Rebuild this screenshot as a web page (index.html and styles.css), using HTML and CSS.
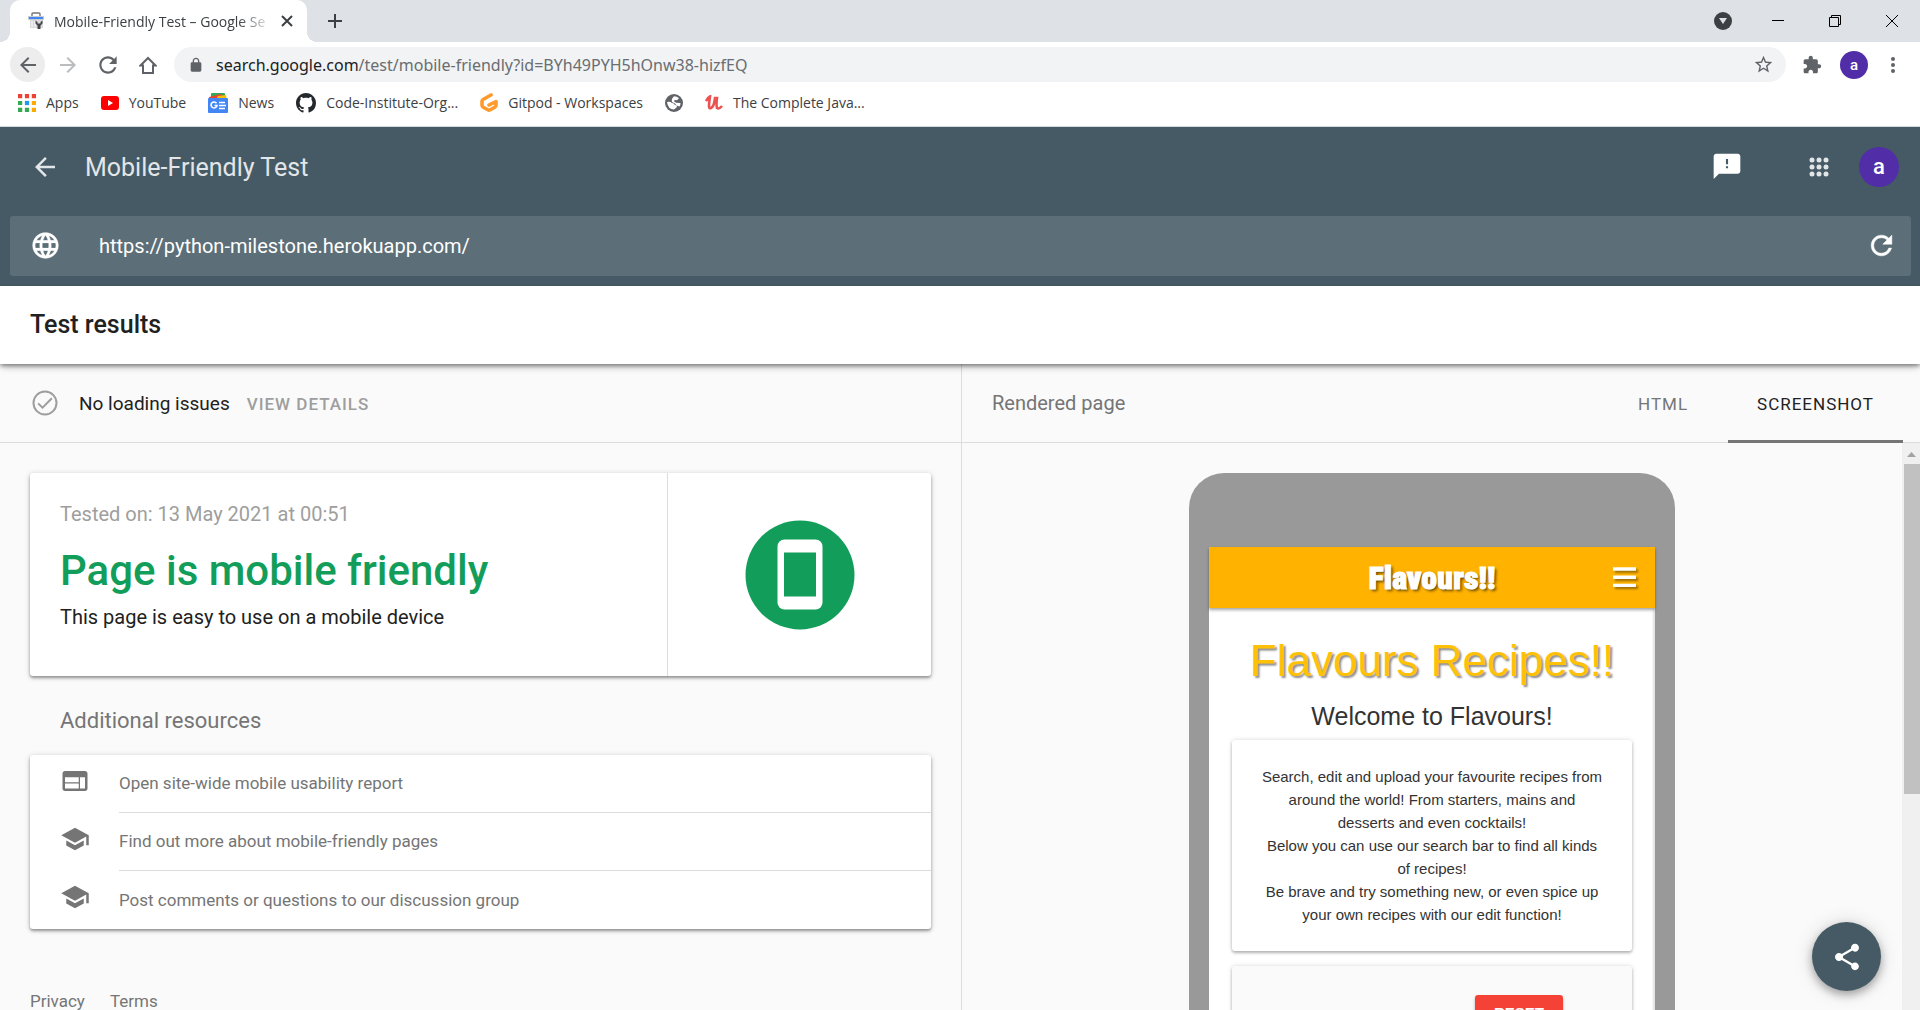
FILE: index.html
```html
<!DOCTYPE html>
<html lang="en">
<head>
<meta charset="utf-8">
<title>Mobile-Friendly Test – Google Search Console</title>
<link rel="stylesheet" href="styles.css">
</head>
<body>
<div class="browser">
  <div class="tabstrip">
    <div class="tab">
      <svg class="tab-favicon" viewBox="0 0 18 18"><path d="M5 4V2q0-1 1-1h6q1 0 1 1v2" fill="none" stroke="#777" stroke-width="1.4"/><path d="M1 4h16v4H1z" fill="#c9cdd2"/><path d="M2 5h14v2H2z" fill="#4285f4"/><path d="M3 8h13v8H3z" fill="#d8dadd"/><path d="M5 9v6M8 9v6" stroke="#fff"/><path d="M8.500 8.500v3l2 2V17h3v-3.500l2-2v-3L13.500 10v1.500h-3V10z" fill="#444"/></svg>
      <span class="tab-title">Mobile-Friendly Test – Google Se</span>
      <button class="icon-button tab-close" aria-label="Close tab"><svg width="12" height="12" viewBox="0 0 12 12"><path d="M1 1l10 10M11 1L1 11" stroke="#3c4043" stroke-width="2"/></svg></button>
    </div>
    <button class="icon-button new-tab" aria-label="New tab"><svg width="16" height="16" viewBox="0 0 16 16"><path d="M8 1v14M1 8h14" stroke="#3c4043" stroke-width="2"/></svg></button>
    <div class="window-controls">
      <button class="icon-button" aria-label="Search tabs"><svg width="18" height="18" viewBox="0 0 18 18"><circle cx="9" cy="9" r="9" fill="#3c4043"/><path d="M5 6h8l-4 6z" fill="#dee1e6"/></svg></button>
      <button class="icon-button" aria-label="Minimise"><svg width="12" height="12" viewBox="0 0 12 12"><path d="M0 5.500h12" stroke="#000"/></svg></button>
      <button class="icon-button" aria-label="Restore"><svg width="12" height="12" viewBox="0 0 12 12"><path d="M.5 2.500h9v9h-9zM2.500 2.500v-2h9v9h-2" fill="none" stroke="#000"/></svg></button>
      <button class="icon-button" aria-label="Close"><svg width="12" height="12" viewBox="0 0 12 12"><path d="M0 0l12 12M12 0L0 12" stroke="#000"/></svg></button>
    </div>
  </div>
  <div class="toolbar">
    <nav class="toolbar-nav">
      <button class="icon-button round active" aria-label="Back"><svg width="24" height="24" viewBox="0 0 24 24"><path fill="#5f6368" d="M20 11H7.830l5.590-5.590L12 4l-8 8 8 8 1.410-1.410L7.830 13H20v-2z"/></svg></button>
      <button class="icon-button round" aria-label="Forward"><svg width="24" height="24" viewBox="0 0 24 24"><path fill="#babcbe" d="M12 4l-1.410 1.410L16.170 11H4v2h12.170l-5.580 5.590L12 20l8-8z"/></svg></button>
      <button class="icon-button round" aria-label="Reload"><svg width="26" height="26" viewBox="0 0 24 24"><path fill="#5f6368" d="M17.650 6.350C16.200 4.900 14.210 4 12 4c-4.420 0-7.990 3.580-7.990 8s3.570 8 7.990 8c3.730 0 6.840-2.550 7.730-6h-2.080c-.82 2.330-3.040 4-5.650 4-3.310 0-6-2.690-6-6s2.690-6 6-6c1.660 0 3.140.69 4.220 1.780L13 11h7V4l-2.350 2.350z"/></svg></button>
      <button class="icon-button round" aria-label="Home"><svg width="18" height="18" viewBox="0 0 18 18"><path d="M1.500 9.500L9 2l7.500 7.500H14V17H4V9.500z" fill="none" stroke="#5f6368" stroke-width="2"/></svg></button>
    </nav>
    <div class="omnibox">
      <svg width="16" height="16" viewBox="0 0 24 24"><path fill="#5f6368" d="M18 8h-1V6c0-2.760-2.240-5-5-5S7 3.240 7 6v2H6c-1.100 0-2 .9-2 2v10c0 1.100.9 2 2 2h12c1.100 0 2-.9 2-2V10c0-1.100-.9-2-2-2zM9 8V6c0-1.660 1.340-3 3-3s3 1.340 3 3v2H9z"/></svg>
      <div class="address" role="textbox" aria-label="Address" contenteditable="true" spellcheck="false"><span class="host">search.google.com</span>/test/mobile-friendly?id=BYh49PYH5hOnw38-hizfEQ</div>
      <button class="icon-button" aria-label="Bookmark this page"><svg width="21" height="21" viewBox="0 0 24 24"><path fill="#5f6368" d="M22 9.240l-7.190-.62L12 2 9.190 8.630 2 9.240l5.460 4.730L5.820 21 12 17.270 18.180 21l-1.630-7.030L22 9.240zM12 15.400l-3.760 2.270 1-4.280-3.320-2.880 4.380-.38L12 6.100l1.710 4.040 4.380.38-3.320 2.880 1 4.280L12 15.400z"/></svg></button>
    </div>
    <div class="toolbar-actions">
      <button class="icon-button" aria-label="Extensions"><svg width="20" height="20" viewBox="0 0 24 24"><path fill="#5f6368" d="M20.500 11H19V7c0-1.100-.9-2-2-2h-4V3.500C13 2.120 11.880 1 10.500 1S8 2.120 8 3.500V5H4c-1.100 0-1.990.9-1.990 2v3.800H3.500c1.490 0 2.700 1.210 2.700 2.700s-1.210 2.700-2.700 2.700H2V20c0 1.100.9 2 2 2h3.800v-1.500c0-1.490 1.210-2.700 2.700-2.700 1.490 0 2.700 1.210 2.700 2.700V22H17c1.100 0 2-.9 2-2v-4h1.500c1.380 0 2.500-1.120 2.500-2.500S21.880 11 20.500 11z"/></svg></button>
      <button class="avatar avatar-small" aria-label="Profile">a</button>
      <button class="icon-button" aria-label="Menu"><svg width="6" height="18" viewBox="0 0 6 18"><g fill="#5f6368"><circle cx="3" cy="3" r="2"/><circle cx="3" cy="9" r="2"/><circle cx="3" cy="15" r="2"/></g></svg></button>
    </div>
  </div>
  <nav class="bookmarks" aria-label="Bookmarks">
    <a href="#apps"><svg width="18" height="18" viewBox="0 0 17 17"><path fill="#ea4335" d="M0 0h4v4H0zM6.500 0h4v4h-4zM13 0h4v4h-4z"/><path fill="#34a853" d="M0 6.500h4v4H0zM0 13h4v4H0zM6.500 13h4v4h-4z"/><path fill="#2196f3" d="M6.500 6.500h4v4h-4z"/><path fill="#fbab00" d="M13 6.500h4v4h-4zM13 13h4v4h-4z"/></svg>Apps</a>
    <a href="#youtube"><svg width="18" height="14" viewBox="0 0 18 14"><rect width="18" height="14" rx="3" fill="#f00"/><path d="M7 4l5 3-5 3z" fill="#fff"/></svg>YouTube</a>
    <a href="#news"><svg width="20" height="20" viewBox="0 0 20 20"><path d="M3 1q0-1 1-1h12q1 0 1 1v5H3z" fill="#34a853"/><path d="M1 4l12-3 2 6H1z" fill="#ea4335"/><path d="M10 3l8-1 1 5H8z" fill="#fbbc04"/><rect y="5" width="20" height="15" rx="1" fill="#4285f4"/><path d="M8.500 10.200A3 3 0 1 0 9 12.500H6.500" fill="none" stroke="#fff" stroke-width="1.600"/><path d="M11 9.500h6M11 12.500h7M11 15.500h6" stroke="#fff" stroke-width="1.600"/></svg>News</a>
    <a href="#code-institute"><svg width="20" height="20" viewBox="0 0 16 16"><path fill="#24292e" d="M8 0C3.580 0 0 3.580 0 8c0 3.540 2.290 6.530 5.470 7.590.4.07.55-.17.55-.38 0-.19-.01-.82-.01-1.490-2.010.37-2.530-.49-2.690-.94-.09-.23-.48-.94-.82-1.130-.28-.15-.68-.52-.01-.53.63-.01 1.080.58 1.230.82.72 1.210 1.870.87 2.330.66.07-.52.28-.87.51-1.070-1.780-.2-3.640-.89-3.640-3.950 0-.87.31-1.590.82-2.150-.08-.2-.36-1.020.08-2.120 0 0 .67-.21 2.200.82.64-.18 1.320-.27 2-.27s1.360.09 2 .27c1.530-1.040 2.200-.82 2.200-.82.44 1.100.16 1.920.08 2.120.51.56.82 1.270.82 2.150 0 3.070-1.870 3.750-3.650 3.950.29.25.54.73.54 1.480 0 1.070-.01 1.930-.01 2.200 0 .21.15.46.55.38A8.010 8.010 0 0016 8c0-4.420-3.580-8-8-8z"/></svg>Code-Institute-Org...</a>
    <a href="#gitpod"><svg width="18" height="20" viewBox="0 0 18 20"><path d="M11 2L3.500 6.200q-1.500.8-1.500 2v4q0 1.300 1.200 2l4.600 2.600q1.200.7 2.400 0l4.600-2.600q1.200-.7 1.200-2V8.500L9 12" fill="none" stroke="#ff9a2e" stroke-width="3.600" stroke-linejoin="round" stroke-linecap="round"/></svg>Gitpod - Workspaces</a>
    <a href="#site" aria-label="Saved site"><svg width="18" height="18" viewBox="0 0 18 18"><circle cx="9" cy="9" r="9" fill="#5f6368"/><path d="M2 8q3-1 5 1 2 0 3 2 2 0 2 2l-3 2.500q-6 0-7-7.500zM9 2.200q3 0 5 2l-2 2q-3-.5-3 1l2 1.500 4.500.3q0 2-1 3.500l-3-1-1.500-2-3-1.500q-1-3 2-5.800z" fill="#fff"/></svg></a>
    <a href="#java"><svg width="18" height="16" viewBox="0 0 18 16"><path d="M1 6q2-3.500 4-4.500Q4 8 4 11q0 3 2 2 3-1 4-10h2q-1 7 0 10 2 1.500 5-2" fill="none" stroke="#ec5252" stroke-width="2.600"/></svg>The Complete Java...</a>
  </nav>
</div>

<header class="app-header">
  <div class="app-bar">
    <a class="back" href="#back" aria-label="Back"><svg width="30" height="30" viewBox="0 0 24 24"><path fill="#e3e6e8" d="M20 11H7.830l5.590-5.590L12 4l-8 8 8 8 1.410-1.410L7.830 13H20v-2z"/></svg></a>
    <h1 class="app-title">Mobile-Friendly Test</h1>
    <button class="icon-button feedback" aria-label="Send feedback"><svg width="32" height="32" viewBox="0 0 24 24"><path fill="#fff" d="M20 2H4c-1.100 0-1.990.9-1.990 2L2 21l4-4h14c1.100 0 2-.9 2-2V4c0-1.100-.9-2-2-2zm-7.200 11h-1.600v-1.600h1.600V13zm0-3h-1.600V6h1.600v4z"/></svg></button>
    <button class="icon-button apps" aria-label="Google apps"><svg width="20" height="20" viewBox="0 0 20 20"><g fill="#e3e6e8"><circle cx="3" cy="3" r="2.500"/><circle cx="10" cy="3" r="2.500"/><circle cx="17" cy="3" r="2.500"/><circle cx="3" cy="10" r="2.500"/><circle cx="10" cy="10" r="2.500"/><circle cx="17" cy="10" r="2.500"/><circle cx="3" cy="17" r="2.500"/><circle cx="10" cy="17" r="2.500"/><circle cx="17" cy="17" r="2.500"/></g></svg></button>
    <button class="avatar avatar-large" aria-label="Google account">a</button>
  </div>
  <form class="url-bar">
    <svg width="31" height="31" viewBox="0 0 24 24"><path fill="#fff" stroke="#fff" stroke-width=".2" d="M11.990 2C6.470 2 2 6.480 2 12s4.470 10 9.990 10C17.520 22 22 17.520 22 12S17.520 2 11.990 2zm6.930 6h-2.950c-.32-1.250-.78-2.450-1.380-3.560 1.840.63 3.370 1.910 4.330 3.560zM12 4.040c.83 1.200 1.480 2.530 1.910 3.960h-3.820c.43-1.430 1.080-2.760 1.910-3.960zM4.260 14C4.100 13.360 4 12.690 4 12s.1-1.360.26-2h3.380c-.08.66-.14 1.320-.14 2s.06 1.340.14 2H4.260zm.82 2h2.950c.32 1.250.78 2.450 1.380 3.560-1.840-.63-3.370-1.900-4.330-3.560zm2.950-8H5.080c.96-1.660 2.490-2.930 4.330-3.560C8.810 5.550 8.350 6.750 8.030 8zM12 19.960c-.83-1.200-1.480-2.530-1.910-3.960h3.820c-.43 1.430-1.080 2.760-1.910 3.960zM14.340 14H9.660c-.09-.66-.16-1.320-.16-2s.07-1.350.16-2h4.680c.09.65.16 1.320.16 2s-.07 1.340-.16 2zm.25 5.560c.6-1.110 1.060-2.310 1.380-3.560h2.950c-.96 1.650-2.490 2.930-4.330 3.560zM16.360 14c.08-.66.14-1.320.14-2s-.06-1.340-.14-2h3.380c.16.64.26 1.310.26 2s-.1 1.360-.26 2h-3.380z"/></svg>
    <input class="url-input" type="text" value="https://python-milestone.herokuapp.com/" aria-label="URL to test" spellcheck="false">
    <button class="icon-button" type="button" aria-label="Test again"><svg width="31" height="31" viewBox="0 0 24 24"><path fill="#fff" stroke="#fff" stroke-width=".4" d="M17.650 6.350C16.200 4.900 14.210 4 12 4c-4.420 0-7.990 3.580-7.990 8s3.570 8 7.990 8c3.730 0 6.840-2.550 7.730-6h-2.080c-.82 2.330-3.040 4-5.650 4-3.310 0-6-2.690-6-6s2.690-6 6-6c1.660 0 3.140.69 4.220 1.780L13 11h7V4l-2.350 2.350z"/></svg></button>
  </form>
</header>

<div class="results-bar"><h2>Test results</h2></div>

<main class="panes">
  <section class="pane pane-left">
    <div class="pane-head status">
      <svg width="30" height="30" viewBox="0 0 24 24"><circle cx="12" cy="12" r="9.200" fill="none" stroke="#9e9e9e" stroke-width="1.600"/><path d="M6.500 12.300l3.500 3.400 7.500-7.500" fill="none" stroke="#9e9e9e" stroke-width="1.600"/></svg>
      <span class="status-text">No loading issues</span>
      <button class="view-details">VIEW DETAILS</button>
    </div>
    <div class="pane-body">
      <article class="card verdict">
        <div class="verdict-text">
          <p class="tested-on">Tested on: 13 May 2021 at 00:51</p>
          <h3>Page is mobile friendly</h3>
          <p class="verdict-note">This page is easy to use on a mobile device</p>
        </div>
        <div class="verdict-icon">
          <svg width="110" height="110" viewBox="0 0 110 110"><circle cx="55" cy="55" r="54.500" fill="#129e5a"/><rect x="32.500" y="19.500" width="45" height="70" rx="7" fill="#fff"/><path fill="#129e5a" d="M39 32.500h32v44H39z"/></svg>
        </div>
      </article>
      <h4 class="resources-title">Additional resources</h4>
      <ul class="card resources">
        <li><svg width="30" height="30" viewBox="0 0 24 24"><path fill="#757575" d="M20 4H4c-1.100 0-1.990.9-1.990 2L2 18c0 1.100.9 2 2 2h16c1.100 0 2-.9 2-2V6c0-1.100-.9-2-2-2zm-5 14H4v-4h11v4zm0-5H4V9h11v4zm5 5h-4V9h4v9z"/></svg><a href="#usability">Open site-wide mobile usability report</a></li>
        <li><svg width="30" height="30" viewBox="0 0 24 24"><path fill="#757575" d="M5 13.180v4L12 21l7-3.820v-4L12 17l-7-3.820zM12 3L1 9l11 6 9-4.910V17h2V9L12 3z"/></svg><a href="#learn">Find out more about mobile-friendly pages</a></li>
        <li><svg width="30" height="30" viewBox="0 0 24 24"><path fill="#757575" d="M5 13.180v4L12 21l7-3.820v-4L12 17l-7-3.820zM12 3L1 9l11 6 9-4.910V17h2V9L12 3z"/></svg><a href="#group">Post comments or questions to our discussion group</a></li>
      </ul>
      <footer class="legal"><a href="#privacy">Privacy</a><a href="#terms">Terms</a></footer>
    </div>
  </section>

  <section class="pane pane-right">
    <div class="pane-head rendered">
      <span class="rendered-title">Rendered page</span>
      <div class="tabs" role="tablist">
        <button class="view-tab" role="tab" aria-selected="false">HTML</button>
        <button class="view-tab selected" role="tab" aria-selected="true">SCREENSHOT</button>
      </div>
    </div>
    <div class="preview">
      <div class="preview-area">
        <div class="phone">
          <div class="phone-screen">
            <div class="site-nav">
              <span class="site-logo">Flavours!!</span>
              <button class="icon-button site-menu" aria-label="Site menu"><svg width="24" height="22" viewBox="0 0 24 22"><path d="M0 2h23M0 10.200h23M0 18.400h23" stroke="#fff" stroke-width="3.400"/></svg></button>
            </div>
            <h2 class="site-heading">Flavours Recipes!!</h2>
            <p class="site-welcome">Welcome to Flavours!</p>
            <div class="site-card">Search, edit and upload your favourite recipes from<br>around the world! From starters, mains and<br>desserts and even cocktails!<br>Below you can use our search bar to find all kinds<br>of recipes!<br>Be brave and try something new, or even spice up<br>your own recipes with our edit function!</div>
            <div class="site-card site-search"><button class="site-reset">RESET</button></div>
          </div>
        </div>
      </div>
      <div class="scrollbar" aria-hidden="true">
        <svg width="18" height="21" viewBox="0 0 18 21"><path d="M5 14l4.500-5 4.500 5z" fill="#a3a3a3"/></svg>
        <div class="thumb"></div>
      </div>
      <button class="share" aria-label="Share"><svg width="32" height="32" viewBox="0 0 24 24"><path fill="#fff" d="M18 16.080c-.76 0-1.440.3-1.960.77L8.910 12.700c.05-.23.09-.46.09-.7s-.04-.47-.09-.7l7.050-4.110c.54.5 1.250.81 2.040.81 1.660 0 3-1.340 3-3s-1.340-3-3-3-3 1.340-3 3c0 .24.04.47.09.7L8.040 9.810C7.500 9.310 6.790 9 6 9c-1.660 0-3 1.340-3 3s1.340 3 3 3c.79 0 1.500-.31 2.040-.81l7.120 4.160c-.05.21-.08.43-.08.65 0 1.610 1.310 2.920 2.920 2.920s2.920-1.310 2.920-2.920-1.310-2.920-2.920-2.920z"/></svg></button>
    </div>
  </section>
</main>
</body>
</html>
```

FILE: styles.css
```css
* { box-sizing: border-box; }
body {
  margin: 0;
  height: 100vh;
  display: flex;
  flex-direction: column;
  overflow: hidden;
  background: #fafafa;
  font-family: Roboto, sans-serif;
  color: #212121;
}
h1, h2, h3, h4, p, ul { margin: 0; padding: 0; font-weight: 400; }
a { color: inherit; text-decoration: none; }
button { font-family: inherit; border: 0; padding: 0; background: none; cursor: pointer; }
svg { display: block; flex: none; }
.icon-button { display: flex; align-items: center; justify-content: center; flex: none; }

/* Browser window */
.browser { flex: none; background: #fff; border-bottom: 1px solid #d5d8dc; font-family: "Open Sans", sans-serif; }
.tabstrip { display: flex; align-items: center; height: 42px; padding-left: 10px; background: #dee1e6; }
.tab {
  position: relative;
  display: flex;
  align-items: center;
  width: 297px;
  height: 42px;
  padding: 0 14px 0 17px;
  background: #fff;
  border-radius: 10px 10px 0 0;
}
.tab::before, .tab::after { content: ""; position: absolute; bottom: 0; width: 10px; height: 10px; }
.tab::before { left: -10px; background: radial-gradient(circle at 0 0, transparent 10px, #fff 10px); }
.tab::after { right: -10px; background: radial-gradient(circle at 100% 0, transparent 10px, #fff 10px); }
.tab-favicon { width: 18px; height: 18px; }
.tab-title {
  flex: 1;
  margin: 0 8px 0 9px;
  overflow: hidden;
  white-space: nowrap;
  font-size: 14px;
  color: #3c4043;
  -webkit-mask-image: linear-gradient(to right, #000 84%, transparent);
  mask-image: linear-gradient(to right, #000 84%, transparent);
}
.new-tab { margin-left: 20px; }
.window-controls { display: flex; align-items: center; margin-left: auto; height: 36px; padding-right: 22px; gap: 45px; }
.window-controls .icon-button:first-child { margin-right: -5px; }
.toolbar { display: flex; align-items: center; height: 45px; padding: 0 24px 0 10px; }
.toolbar-nav { display: flex; gap: 5px; width: 164px; }
.round { width: 35px; height: 35px; border-radius: 50%; }
.active { background: #ededee; }
.omnibox { flex: 1; display: flex; align-items: center; height: 35px; padding: 0 12px 0 14px; border-radius: 18px; background: #f1f3f4; }
.address { flex: 1; margin-left: 12px; font-family: "Noto Sans", sans-serif; font-size: 16px; white-space: nowrap; color: #6a6d71; outline: none; }
.host { color: #202124; }
.toolbar-actions { display: flex; align-items: center; gap: 18px; margin-left: 16px; }
.toolbar-actions .icon-button:last-child { margin-left: 4px; }
.avatar { flex: none; border-radius: 50%; background: #512da8; color: #fff; font-family: Roboto, sans-serif; font-weight: 500; }
.avatar-small { width: 28px; height: 28px; font-size: 15px; }
.avatar-large { width: 40px; height: 40px; font-size: 22px; }
.bookmarks { display: flex; align-items: center; gap: 22px; height: 39px; padding: 0 18px 8px; font-size: 14px; color: #3c4043; }
.bookmarks a { display: flex; align-items: center; gap: 10px; white-space: nowrap; }

/* Test header */
.app-header { flex: none; padding: 0 9px 10px 10px; background: #455a64; }
.app-bar { display: flex; align-items: center; height: 89px; padding: 0 12px 10px 20px; }
.app-title { flex: 1; margin-left: 25px; padding-top: 2px; font-size: 25px; color: #e3e6e8; }
.back { display: block; }
.feedback { margin-right: 66px; }
.apps { margin-right: 30px; }
.url-bar { display: flex; align-items: center; height: 60px; padding: 0 14px 2px 20px; border-radius: 3px; background: #5c6e77; }
.url-input { flex: 1; margin-left: 38px; padding: 2px 0 0; border: 0; outline: none; background: none; color: #fff; font-family: inherit; font-size: 20px; }
.results-bar {
  position: relative;
  flex: none;
  display: flex;
  align-items: center;
  height: 78px;
  padding: 0 0 2px 30px;
  background: #fff;
  box-shadow: 0 2px 4px rgba(0, 0, 0, .4), 0 5px 8px -2px rgba(0, 0, 0, .2);
}
.results-bar h2 { font-size: 25px; font-weight: 500; }

/* Panes */
.panes { flex: 1; min-height: 0; display: grid; grid-template-columns: calc(50% + 2px) 1fr; }
.pane { display: flex; flex-direction: column; min-height: 0; }
.pane-left { border-right: 1px solid #dcdcdc; }
.pane-head { flex: none; display: flex; align-items: center; height: 79px; border-bottom: 1px solid #dcdcdc; }
.status { padding-left: 30px; }
.status-text { margin: 0 17px 0 19px; font-size: 19px; }
.view-details { padding-top: 2px; color: #9e9e9e; font-size: 17px; font-weight: 500; letter-spacing: 1px; }
.pane-body { padding: 30px 30px 0; overflow: hidden; flex: 1; }
.card { background: #fff; border-radius: 3px; box-shadow: 0 2px 3px rgba(0, 0, 0, .35), 0 1px 6px rgba(0, 0, 0, .16); }
.verdict { display: flex; height: 203px; }
.verdict-text { flex: 1; padding: 29px 30px 0; }
.tested-on { font-size: 20px; line-height: 24px; color: #9e9e9e; }
.verdict-text h3 { margin-top: 15px; font-size: 42px; line-height: 60px; font-weight: 500; color: #129e5a; }
.verdict-note { margin-top: 4px; font-size: 20px; line-height: 24px; }
.verdict-icon { display: grid; place-items: center; width: 264px; border-left: 1px solid #dcdcdc; }
.resources-title { padding: 29px 30px 19px; font-size: 22px; line-height: 31px; color: #757575; }
.resources { list-style: none; }
.resources li { display: flex; align-items: center; height: 58px; padding-left: 30px; }
.resources svg { margin-bottom: 6px; }
.resources a { flex: 1; margin-left: 29px; font-size: 17px; line-height: 57px; color: #757575; border-bottom: 1px solid #dcdcdc; }
.resources li:last-child a { border-bottom: 0; }
.legal { display: flex; gap: 25px; margin-top: 60px; font-size: 17px; line-height: 24px; color: #757575; }

.rendered { justify-content: space-between; padding: 0 17px 0 30px; }
.rendered-title { font-size: 20px; color: #757575; }
.tabs { display: flex; align-self: stretch; margin-bottom: -1px; }
.view-tab { padding: 3px 29px 0; border-bottom: 3px solid transparent; font-size: 17px; letter-spacing: 1px; color: #757575; }
.view-tab.selected { color: #212121; border-color: #757575; }
.view-tab:first-child { padding: 3px 40px 0; }
.preview { position: relative; flex: 1; min-height: 0; display: flex; }
.preview-area { flex: 1; display: flex; justify-content: center; align-items: flex-start; padding-top: 30px; overflow: hidden; }
.scrollbar { width: 18px; background: #f0f0f0; }
.thumb { height: 330px; margin-left: 2px; background: #c1c1c1; }
.share {
  position: absolute;
  right: 39px;
  bottom: 19px;
  display: grid;
  place-items: center;
  width: 69px;
  height: 69px;
  border-radius: 50%;
  background: #455a64;
  box-shadow: 0 4px 8px rgba(0, 0, 0, .3), 0 1px 20px rgba(0, 0, 0, .14);
}

/* Rendered phone page */
.phone { width: 486px; padding: 74px 20px 80px; border-radius: 35px; background: #999; }
.phone-screen { background: #fff; font-family: "Liberation Sans", sans-serif; text-align: center; box-shadow: inset -2px 0 2px rgba(0, 0, 0, .12); }
.site-nav { position: relative; display: flex; align-items: center; justify-content: center; height: 61px; background: #ffb300; box-shadow: 0 2px 3px rgba(0, 0, 0, .35); }
.site-logo { font-family: Impact, "Roboto Condensed", Roboto, sans-serif; font-size: 32px; font-weight: 900; color: #fff; -webkit-text-stroke: 1px #fff; text-shadow: 2px 2px 3px rgba(0, 0, 0, .6); }
.site-menu { position: absolute; right: 18px; top: 20px; filter: drop-shadow(2px 2px 1px rgba(0, 0, 0, .4)); }
.site-heading { margin-top: 23px; font-size: 44px; line-height: 60px; color: #ffc107; text-shadow: 2px 2px 2px rgba(0, 0, 0, .45); }
.site-welcome { margin-top: 10px; font-size: 25px; line-height: 30px; color: #333; }
.site-card { margin: 9px 23px 15px; padding: 25px 10px; border-radius: 3px; font-size: 15px; line-height: 23px; color: #333; box-shadow: 0 2px 3px rgba(0, 0, 0, .25), 0 0 5px rgba(0, 0, 0, .14); }
.site-search { display: flex; justify-content: flex-end; align-items: flex-start; height: 300px; margin-bottom: 0; padding: 29px 69px; background: #fafafa; }
.site-reset { width: 88px; height: 45px; padding-bottom: 10px; border-radius: 3px; background: #f44336; color: #fff; font-size: 15px; font-weight: 700; box-shadow: 0 2px 3px rgba(0, 0, 0, .3); }
```
